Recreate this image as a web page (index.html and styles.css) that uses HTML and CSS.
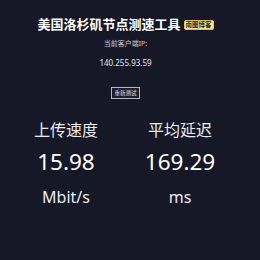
FILE: index.html
```html
<!DOCTYPE html>
<html lang="zh">
<head>
<meta charset="utf-8">
<link rel="stylesheet" href="styles.css">
</head>
<body>
<main class="page">
  <h1 class="title">美国洛杉矶节点测速工具<span class="badge">南图博客</span></h1>
  <p class="label">当前客户端IP:</p>
  <p class="ip">140.255.93.59</p>
  <button class="retest">重新测试</button>
  <section class="stats">
    <div class="stat">
      <div class="stat-name">上传速度</div>
      <div class="stat-value">15.98</div>
      <div class="stat-unit">Mbit/s</div>
    </div>
    <div class="stat">
      <div class="stat-name">平均延迟</div>
      <div class="stat-value">169.29</div>
      <div class="stat-unit">ms</div>
    </div>
  </section>
</main>
</body>
</html>
```
FILE: styles.css
```css
html, body {
  margin: 0;
  padding: 0;
  background: #161827;
  color: #fff;
  font-family: "Noto Sans", "Noto Sans CJK SC", sans-serif;
}
.page {
  width: 251px;
  height: 260px;
  padding-top: 16px;
  box-sizing: border-box;
  display: flex;
  flex-direction: column;
  align-items: center;
}
.title {
  margin: 0;
  font-size: 13px;
  line-height: 16px;
  font-weight: 700;
  display: flex;
  align-items: center;
  gap: 3px;
  white-space: nowrap;
}
.badge {
  background: #f2e49b;
  color: #2a2a1a;
  font-size: 6.5px;
  line-height: 8px;
  padding: 0 1px;
  border: 1px solid #d9c56a;
  border-radius: 2px;
  font-weight: 700;
  margin-top: 2px;
}
.label {
  margin: 7px 0 0;
  font-size: 7px;
  line-height: 10px;
  color: #c8c9d0;
}
.ip {
  margin: 9px 0 0;
  font-size: 8px;
  line-height: 10px;
  color: #e6e6ea;
}
.retest {
  margin-top: 19px;
  font-family: inherit;
  font-size: 5.5px;
  line-height: 10px;
  color: #e0e0e6;
  background: #1c1e2e;
  border: 1px solid #b4b5bd;
  padding: 0 2px;
  white-space: nowrap;
  height: 12px;
  box-sizing: border-box;
}
.stats {
  margin-top: 21px;
  align-self: flex-start;
  margin-left: 16px;
  display: grid;
  grid-template-columns: 100px 100px;
  column-gap: 14px;
}
.stat {
  display: flex;
  flex-direction: column;
  align-items: center;
}
.stat-name {
  font-size: 16px;
  line-height: 20px;
  color: #ececf0;
}
.stat-value {
  margin-top: 8px;
  font-size: 22.5px;
  line-height: 28px;
}
.stat-unit {
  margin-top: 11px;
  font-size: 16px;
  line-height: 20px;
  color: #ececf0;
}
```
